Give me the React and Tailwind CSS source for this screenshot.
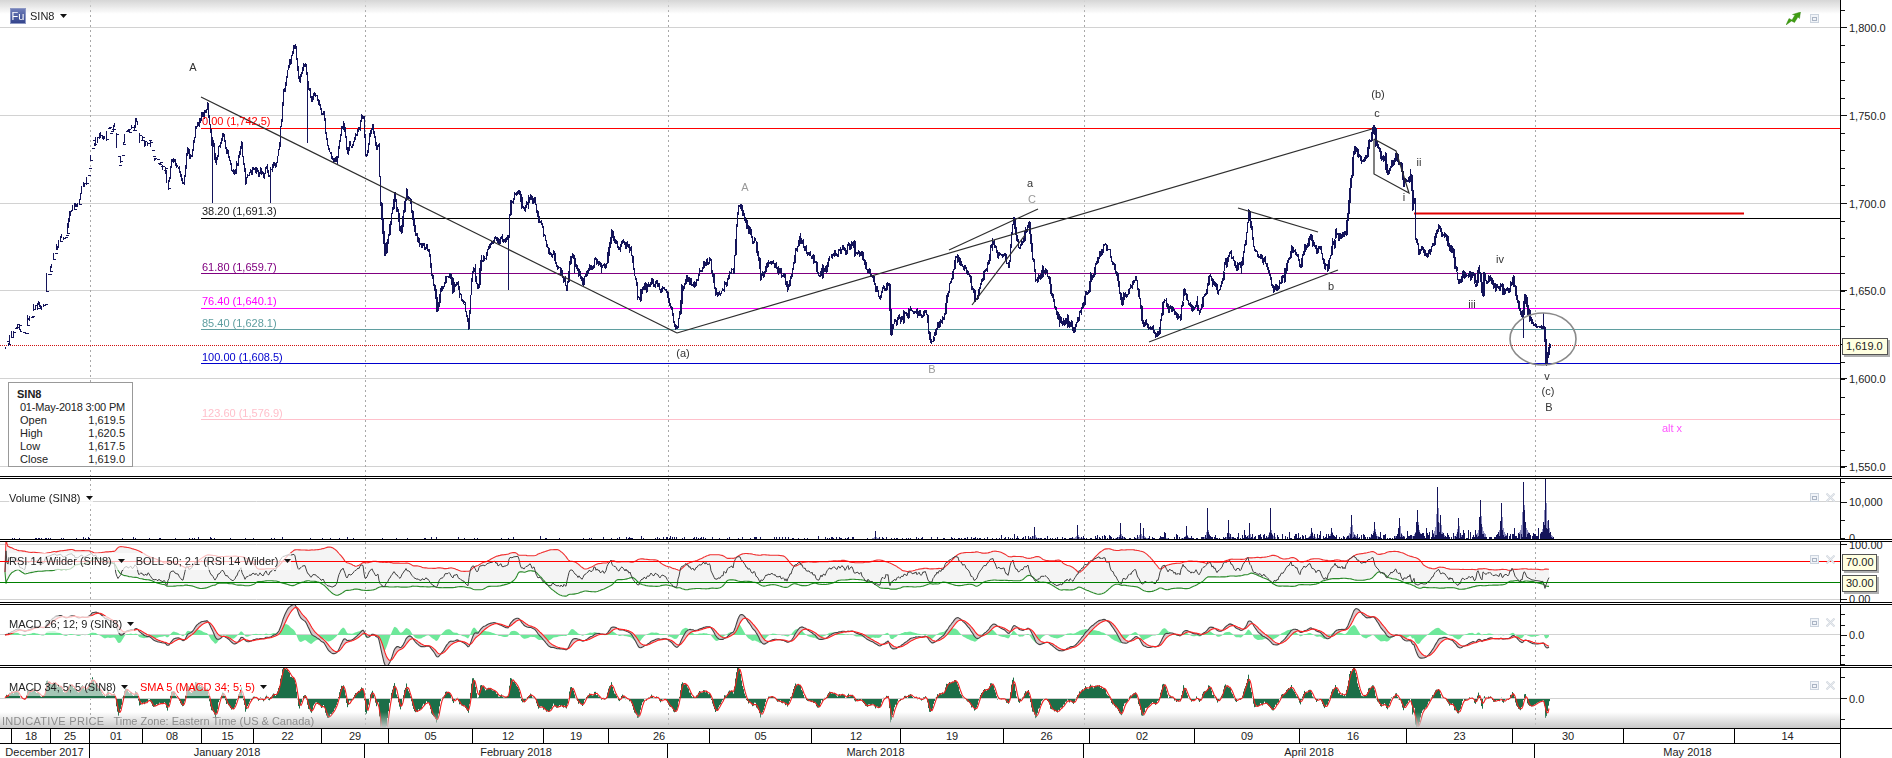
import React from "react";

// price path read off the chart, page pixels [x, y]
const KEYS = [
  [5,347],[6,337],[16,328],[26,322],[34,303],[44,310],[46,283],[52,263],[56,248],[66,227],[74,207],[80,193],[86,182],[90,160],[92,147],
  [100,137],[114,130],[118,165],[124,133],[137,120],[139,143],[149,140],[155,163],[165,177],[167,187],[171,157],[177,173],[183,182],
  [187,147],[191,157],[195,123],[201,113],[207,105],[211,133],[215,157],[221,133],[229,153],[235,173],[241,150],[245,185],[249,167],
  [257,167],[265,173],[275,173],[279,150],[283,97],[289,70],[295,50],[299,83],[305,63],[311,100],[319,97],[323,115],[325,133],[329,157],
  [337,163],[343,127],[347,160],[355,133],[363,115],[365,147],[372,133],[378,150],[380,207],[382,227],[384,248],[388,227],[394,197],
  [400,230],[406,192],[414,233],[420,248],[428,253],[432,283],[436,310],[446,280],[454,283],[462,293],[468,323],[472,273],[478,287],
  [480,263],[488,252],[490,240],[508,247],[510,210],[516,187],[522,210],[530,197],[538,217],[542,237],[550,257],[556,270],[566,287],
  [570,260],[583,283],[595,257],[605,273],[611,235],[617,250],[630,247],[637,300],[645,290],[655,277],[664,297],[677,330],[682,287],
  [694,280],[701,267],[709,257],[716,290],[733,273],[738,210],[745,227],[755,237],[760,273],[772,267],[787,290],[799,243],[812,260],
  [819,283],[839,247],[851,250],[871,273],[880,300],[888,280],[890,327],[910,307],[925,313],[930,343],[944,317],[949,280],[954,260],
  [969,270],[974,303],[984,270],[991,247],[1008,257],[1013,223],[1018,243],[1028,223],[1035,273],[1047,273],[1055,313],[1074,327],
  [1084,300],[1097,257],[1104,247],[1116,273],[1121,300],[1136,280],[1141,317],[1158,333],[1163,300],[1180,320],[1183,287],[1200,310],
  [1210,273],[1217,290],[1227,257],[1241,270],[1248,213],[1254,247],[1264,257],[1271,290],[1283,273],[1291,250],[1300,262],[1310,233],
  [1327,265],[1335,230],[1345,237],[1350,180],[1354,143],[1362,163],[1373,130],[1377,147],[1389,173],[1396,153],[1400,165],[1403,180],
  [1410,173],[1412,203],[1414,197],[1415,233],[1418,248],[1428,248],[1438,237],[1450,248],[1452,253],[1457,278],[1473,268],[1475,283],
  [1478,265],[1482,297],[1483,278],[1500,280],[1503,293],[1512,278],[1515,293],[1517,300],[1522,313],[1524,293],[1528,317],[1533,325],
  [1543,328],[1544,340],[1545,365],[1548,350],[1549,345],
];
const SPIKES = [[212,203],[270,203],[307,143],[508,290],[574,273],[1523,338],[1543,313]];
const VOL_PEAKS = [
  [875,531],[1034,527],[1077,525],[1120,523],[1140,523],[1143,528],[1164,532],[1186,526],[1207,508],[1228,520],[1249,523],[1270,508],
  [1311,528],[1331,528],[1351,515],[1374,522],[1399,518],[1417,510],[1437,487],[1440,515],[1458,518],[1480,500],[1501,503],[1523,482],
  [1545,479],[1548,520],
];
const DAYS = [
  ["", 12],["18", 39],["25", 39],["01", 53],["08", 59],["15", 52],["22", 68],["29", 67],["05", 84],["12", 71],["19", 65],["26", 101],
  ["05", 102],["12", 89],["19", 103],["26", 86],["02", 105],["09", 105],["16", 107],["23", 106],["30", 111],["07", 111],["14", 105],
];
const MONTHS = [
  ["December 2017", 90],["January 2018", 275],["February 2018", 303],["March 2018", 416],["April 2018", 451],["May 2018", 305],
];
const DIVS = [90, 365, 668, 1084, 1535];

let seed = 20180501;
const rnd = () => {
  seed = (seed + 0x6d2b79f5) | 0;
  let t = Math.imul(seed ^ (seed >>> 15), 1 | seed);
  t = (t + Math.imul(t ^ (t >>> 7), 61 | t)) ^ t;
  return ((t ^ (t >>> 14)) >>> 0) / 4294967296;
};

const ema = (arr, n) => {
  const k = 2 / (n + 1);
  let e = arr[0];
  return arr.map((v) => (e = v * k + e * (1 - k)));
};
const sma = (arr, n) =>
  arr.map((_, i) => {
    const w = arr.slice(Math.max(0, i - n + 1), i + 1);
    return w.reduce((a, b) => a + b, 0) / w.length;
  });
const pts = (xs, ys) => xs.map((x, i) => `${x},${ys[i].toFixed(1)}`).join(" ");

// hourly bars, about one per pixel
const xs = [];
const closes = [];
let noise = 0;
let slow = 0;
let k = 0;
for (let x = 5; x <= 1549; x++) {
  while (k < KEYS.length - 2 && KEYS[k + 1][0] < x) k++;
  const [x0, y0] = KEYS[k];
  const [x1, y1] = KEYS[k + 1];
  const base = y0 + ((y1 - y0) * (x - x0)) / Math.max(1, x1 - x0);
  noise = noise * 0.7 + (rnd() - 0.5) * 9;
  slow = slow * 0.95 + (rnd() - 0.5) * 2;
  xs.push(x);
  closes.push(base + (noise + slow) * (x > 1530 ? 0.2 : 1));
}
let pricePath = "";
let tickPath = "";
closes.forEach((c, i) => {
  const p = i ? closes[i - 1] : c;
  const x = xs[i] + 0.5;
  const reach = rnd() < 0.04 ? 7 : 2.4;
  const hi = Math.min(c, p) - rnd() * reach;
  const lo = Math.max(c, p) + rnd() * reach;
  if (xs[i] < 170 && rnd() < 0.5) {
    tickPath += `M${x} ${c.toFixed(0)}h3`;
    return;
  }
  pricePath += `M${x} ${hi.toFixed(0)}V${lo.toFixed(0)}`;
  if (xs[i] > 380 && rnd() < (xs[i] > 1340 ? 0.8 : 0.45)) {
    pricePath += `M${x + 1} ${(hi + 1).toFixed(0)}V${(lo - 1).toFixed(0)}`;
  }
});

// indicators worked out from the closes, in pixel units
const v = closes.map((c) => -c);
const e12 = ema(v, 12);
const e26 = ema(v, 26);
const macd = e12.map((e, i) => e - e26[i]);
const sig = ema(macd, 9);
const macdY = macd.map((m) => 635 - m * 1.05);
const sigY = sig.map((m) => 635 - m * 1.05);
const histY = macd.map((m, i) => 635 - (m - sig[i]) * 1.3);

let up = 0;
let dn = 0;
const rsi = v.map((c, i) => {
  const d = i ? c - v[i - 1] : 0;
  up = (up * 13 + Math.max(d, 0)) / 14;
  dn = (dn * 13 + Math.max(-d, 0)) / 14;
  return up + dn === 0 ? 50 : 50 + ((100 * up) / (up + dn) - 50) * 0.85;
});
const rsiMid = sma(rsi, 50);
const rsiDev = rsi.map((_, i) => {
  const w = rsi.slice(Math.max(0, i - 49), i + 1);
  return Math.sqrt(w.reduce((a, b) => a + (b - rsiMid[i]) ** 2, 0) / w.length);
});
const rsiToY = (r) => 597 - r * 0.5;
const rsiY = rsi.map(rsiToY);
const upperY = rsi.map((_, i) => rsiToY(rsiMid[i] + 2.1 * rsiDev[i]));
const lowerY = rsi.map((_, i) => rsiToY(rsiMid[i] - 2.1 * rsiDev[i]));

const fast = ema(v, 2);
const slowE = ema(v, 10);
const osc = fast.map((e, i) => e - slowE[i]);
const oscSma = sma(osc, 4);

let volDark = "";
let volLight = "";
xs.forEach((x) => {
  const amp = x < 600 ? 1.6 : x < 1000 ? 2.5 : x < 1200 ? 4 : x < 1400 ? 7 : 10;
  const h = rnd() * rnd() * amp + (rnd() > 0.95 ? rnd() * amp : 0);
  if (h >= 1) volDark += `M${x + 0.5} 539V${(539 - h).toFixed(0)}`;
});
VOL_PEAKS.forEach(([x, y]) => {
  volDark += `M${x + 0.5} 539V${y}`;
  const h = 539 - y;
  for (let i = 1; i < 6; i++) {
    const f = x > 1300 ? 0.6 / i : 0.3 / i;
    volLight += `M${x + i + 0.5} 539V${(539 - h * f).toFixed(0)}M${x - i + 0.5} 539V${(539 - h * f * 0.8).toFixed(0)}`;
    if (x > 1180) volDark += `M${x - i + 0.5} 539V${(539 - h * f * rnd()).toFixed(0)}M${x + i + 0.5} 539V${(539 - h * f * rnd()).toFixed(0)}`;
  }
});

const Caret = () => (
  <svg className="w-[7px] h-[4px] shrink-0" viewBox="0 0 7 4">
    <polygon points="0,0 7,0 3.5,4" fill="#111" />
  </svg>
);

const RestoreIcon = () => (
  <svg className="w-[9px] h-[9px]" viewBox="0 0 9 9">
    <rect x="0.5" y="0.5" width="8" height="8" fill="#f1f4f8" stroke="#ccd4de" />
    <rect x="2.5" y="3.5" width="4" height="3" fill="none" stroke="#aab4c4" />
  </svg>
);

const CloseIcon = () => (
  <svg className="w-[9px] h-[9px]" viewBox="0 0 9 9">
    <path d="M0.5 0.5L8.5 8.5M8.5 0.5L0.5 8.5" stroke="#d4d9e0" strokeWidth="2" />
    <path d="M0.5 0.5L8.5 8.5M8.5 0.5L0.5 8.5" stroke="#eef0f4" strokeWidth="0.7" />
  </svg>
);

const Dividers = ({ top, h }) =>
  DIVS.map((x) => (
    <line key={x} x1={x + 0.5} x2={x + 0.5} y1={top} y2={top + h} stroke="#a8a8a8" strokeDasharray="2 3" />
  ));

const Grid = ({ ys }) =>
  ys.map((y) => <line key={y} x1="0" x2="1840" y1={y + 0.5} y2={y + 0.5} stroke="#d2d2d2" />);

const ChartText = ({ x, y, fill = "#333", anchor = "start", children }) => (
  <text x={x} y={y} fill={fill} textAnchor={anchor} dominantBaseline="central" className="text-[11px]">
    {children}
  </text>
);

const Axis = ({ top, h, major = [], minor = [], labels = [], children }) => (
  <div className="relative w-[52px] h-full border-l border-black bg-white">
    <svg className="block w-[51px] h-full" viewBox={`1841 ${top} 51 ${h}`}>
      {major.map((y) => (
        <line key={y} x1="1841" x2="1847" y1={y + 0.5} y2={y + 0.5} stroke="#111" />
      ))}
      {minor.map((y) => (
        <line key={y} x1="1841" x2="1845" y1={y + 0.5} y2={y + 0.5} stroke="#111" />
      ))}
      {labels.map(([y, t]) => (
        <ChartText key={t} x={1849} y={y} fill="#222">
          {t}
        </ChartText>
      ))}
    </svg>
    {children}
  </div>
);

const Panel = ({ top, h, className, svg, axis, children }) => (
  <div className={`flex ${className}`}>
    <div className="relative flex-1 h-full overflow-hidden">
      <svg className="block w-full h-full will-change-transform" viewBox={`0 ${top} 1840 ${h}`}>
        {svg}
      </svg>
      {children}
    </div>
    {axis}
  </div>
);

const PanelButtons = ({ className, close = true }) => (
  <div className={`absolute flex items-center gap-[7px] ${className}`}>
    <RestoreIcon />
    {close && <CloseIcon />}
  </div>
);

const Tag = ({ className, children }) => (
  <div className={`absolute z-10 flex items-center pl-[3px] bg-[#ffffe1] border border-[#555] shadow-[2px_2px_0_#b0b0b0] text-[11px] text-[#222] ${className}`}>
    {children}
  </div>
);

const Sep = () => <div className="h-[3px] border-y border-black bg-white" />;

const minorTicks = [];
for (let y = 9.5; y < 476; y += 17.6) minorTicks.push(Math.round(y));

export default function App() {
  return (
    <div className="relative flex flex-col w-[1892px] h-[758px] overflow-hidden bg-white text-[11px] text-[#222] font-['Liberation_Sans',sans-serif]">
      {/* Price panel */}
      <Panel
        top={0}
        h={476}
        className="h-[476px]"
        axis={
          <Axis
            top={0}
            h={476}
            minor={minorTicks}
            major={[27, 115, 203, 290, 378, 466]}
            labels={[[28, "1,800.0"],[116, "1,750.0"],[204, "1,700.0"],[291, "1,650.0"],[379, "1,600.0"],[467, "1,550.0"]]}
          >
            <Tag className="left-[1px] top-[338px] w-[46px] h-[17px]">1,619.0</Tag>
          </Axis>
        }
        svg={
          <>
            <Grid ys={[27, 115, 203, 290, 378, 466]} />
            <Dividers top={0} h={476} />
            <line x1="201" x2="1840" y1="128.5" y2="128.5" stroke="#ff0000" />
            <line x1="201" x2="1840" y1="218.5" y2="218.5" stroke="#000" />
            <line x1="201" x2="1840" y1="273.5" y2="273.5" stroke="#800080" />
            <line x1="201" x2="1840" y1="308.5" y2="308.5" stroke="#ff00ff" />
            <line x1="201" x2="1840" y1="329.5" y2="329.5" stroke="#5f9ea0" />
            <line x1="201" x2="1840" y1="363.5" y2="363.5" stroke="#0000cd" />
            <line x1="201" x2="1840" y1="419.5" y2="419.5" stroke="#ffc0cb" />
            <line x1="0" x2="1840" y1="345.5" y2="345.5" stroke="#d01010" strokeDasharray="1 1" />
            <line x1="1414" x2="1744" y1="213.5" y2="213.5" stroke="#e00000" strokeWidth="2" />
            <path d={pricePath} stroke="#14145a" strokeWidth="1" shapeRendering="crispEdges" fill="none" />
            <path d={tickPath} stroke="#14145a" strokeWidth="1" shapeRendering="crispEdges" fill="none" />
            {SPIKES.map(([x, y]) => (
              <line key={x} x1={x + 0.5} x2={x + 0.5} y1={closes[x - 5]} y2={y} stroke="#14145a" />
            ))}
            <g stroke="#2e2e2e" strokeWidth="1.2" fill="none">
              <line x1="201" y1="97" x2="677" y2="333" />
              <line x1="677" y1="333" x2="1372" y2="129" />
              <line x1="949" y1="250" x2="1038" y2="209" />
              <line x1="972" y1="305" x2="1025" y2="235" />
              <line x1="1149" y1="342" x2="1338" y2="270" />
              <line x1="1238" y1="208" x2="1318" y2="232" />
              <polyline points="1374,139 1374,174 1409,193 1396,151 1374,139" />
            </g>
            <ellipse cx="1543" cy="339" rx="33" ry="26" fill="none" stroke="#8a8a8a" strokeWidth="1.6" />
            <ChartText x={202} y={121} fill="#ff0000">0.00 (1,742.5)</ChartText>
            <ChartText x={202} y={211} fill="#222">38.20 (1,691.3)</ChartText>
            <ChartText x={202} y={267} fill="#800080">61.80 (1,659.7)</ChartText>
            <ChartText x={202} y={301} fill="#ff00ff">76.40 (1,640.1)</ChartText>
            <ChartText x={202} y={323} fill="#5f9ea0">85.40 (1,628.1)</ChartText>
            <ChartText x={202} y={357} fill="#0000cd">100.00 (1,608.5)</ChartText>
            <ChartText x={202} y={413} fill="#ffc0cb">123.60 (1,576.9)</ChartText>
            <ChartText x={193} y={67} anchor="middle">A</ChartText>
            <ChartText x={1378} y={94} anchor="middle">(b)</ChartText>
            <ChartText x={1377} y={113} anchor="middle">c</ChartText>
            <ChartText x={1419} y={162} anchor="middle">ii</ChartText>
            <ChartText x={1404} y={197} anchor="middle">i</ChartText>
            <ChartText x={745} y={187} anchor="middle" fill="#999">A</ChartText>
            <ChartText x={1030} y={183} anchor="middle">a</ChartText>
            <ChartText x={1032} y={199} anchor="middle" fill="#999">C</ChartText>
            <ChartText x={683} y={353} anchor="middle">(a)</ChartText>
            <ChartText x={932} y={369} anchor="middle" fill="#999">B</ChartText>
            <ChartText x={1331} y={286} anchor="middle">b</ChartText>
            <ChartText x={1500} y={259} anchor="middle">iv</ChartText>
            <ChartText x={1472} y={304} anchor="middle">iii</ChartText>
            <ChartText x={1547} y={376} anchor="middle">v</ChartText>
            <ChartText x={1548} y={391} anchor="middle">(c)</ChartText>
            <ChartText x={1549} y={407} anchor="middle">B</ChartText>
            <ChartText x={1672} y={428} anchor="middle" fill="#ff55ff">alt x</ChartText>
          </>
        }
      >
        <div className="absolute inset-x-0 top-0 h-[14px] bg-linear-to-b from-[#d6d6d6] to-white/0" />
        <div className="absolute left-[10px] top-[8px] flex items-center">
          <div className="flex items-center justify-center w-[16px] h-[16px] border border-[#8d98c4] bg-linear-to-b from-[#6f7db8] to-[#34448c] text-white text-[11px] leading-none">
            Fu
          </div>
          <span className="ml-[4px] mr-[6px]">SIN8</span>
          <Caret />
        </div>
        <svg className="absolute left-[1786px] top-[12px] w-[15px] h-[13px]" viewBox="0 0 15 13">
          <path d="M0 13L3 6.5L6 8L9 3L6.5 2.5L14.5 0L13.5 6.5L12 5L8.5 10.5L5.5 9L0 13Z" fill="#3f9e12" stroke="#2d7d0a" strokeWidth="0.4" />
        </svg>
        <PanelButtons className="left-[1810px] top-[14px]" close={false} />
        <div className="absolute left-[8px] top-[382px] flex flex-col w-[125px] h-[85px] pl-[8px] pr-[7px] py-[5px] border border-[#999] bg-white leading-[13px] whitespace-nowrap">
          <div className="font-bold">SIN8</div>
          <div className="tracking-[-0.2px] text-right">01-May-2018 3:00 PM</div>
          {[["Open", "1,619.5"],["High", "1,620.5"],["Low", "1,617.5"],["Close", "1,619.0"]].map(([a, b]) => (
            <div key={a} className="flex justify-between pl-[3px]">
              <span>{a}</span>
              <span>{b}</span>
            </div>
          ))}
        </div>
      </Panel>
      <Sep />

      {/* Volume */}
      <Panel
        top={479}
        h={60}
        className="h-[60px]"
        axis={
          <Axis top={479} h={60} major={[502]} minor={[482, 520, 538]} labels={[[502, "10,000"],[538, "0"]]} />
        }
        svg={
          <>
            <Grid ys={[501]} />
            <Dividers top={479} h={60} />
            <path d={volLight} stroke="#8a8abc" fill="none" shapeRendering="crispEdges" />
            <path d={volDark} stroke="#14145a" fill="none" shapeRendering="crispEdges" />
          </>
        }
      >
        <div className="absolute left-[9px] top-[11px] flex items-center gap-[5px] bg-white/70">
          <span>Volume (SIN8)</span>
          <Caret />
        </div>
        <PanelButtons className="left-[1810px] top-[14px]" />
      </Panel>
      <Sep />

      {/* RSI + Bollinger */}
      <Panel
        top={542}
        h={60}
        className="h-[60px]"
        axis={
          <Axis top={542} h={60} labels={[[545, "100.00"],[599, "0.00"]]} major={[544, 599]}>
            <Tag className="left-[1px] top-[12px] w-[35px] h-[17px]">70.00</Tag>
            <Tag className="left-[1px] top-[33px] w-[35px] h-[17px]">30.00</Tag>
          </Axis>
        }
        svg={
          <>
            <Grid ys={[544, 599]} />
            <polygon points={`${pts(xs, upperY)} ${pts([...xs].reverse(), [...lowerY].reverse())}`} fill="#f4f4f4" />
            <Dividers top={542} h={60} />
            <polyline points={pts(xs, upperY)} fill="none" stroke="#f03030" strokeWidth="1.1" />
            <polyline points={pts(xs, lowerY)} fill="none" stroke="#2a8a2a" strokeWidth="1.1" />
            <polyline points={pts(xs, rsiY)} fill="none" stroke="#444" strokeWidth="1" />
            <line x1="0" x2="1840" y1="561.5" y2="561.5" stroke="#ff0000" />
            <line x1="0" x2="1840" y1="582.5" y2="582.5" stroke="#008000" />
          </>
        }
      >
        <div className="absolute left-[9px] top-[11px] flex items-center bg-white/70">
          <span className="mr-[6px]">RSI 14 Wilder (SIN8)</span>
          <Caret />
          <span className="ml-[11px] mr-[6px]">BOLL 50; 2.1 (RSI 14 Wilder)</span>
          <Caret />
        </div>
        <PanelButtons className="left-[1810px] top-[13px]" />
      </Panel>
      <Sep />

      {/* MACD 26 12 9 */}
      <Panel
        top={605}
        h={60}
        className="h-[60px]"
        axis={
          <Axis top={605} h={60} major={[635]} minor={[614, 625, 645, 655, 664]} labels={[[635, "0.0"]]} />
        }
        svg={
          <>
            <Grid ys={[634]} />
            <Dividers top={605} h={60} />
            <polygon points={`5,635 ${pts(xs, histY)} 1549,635`} fill="#6ee89a" />
            <polygon points={`${pts(xs, macdY)} ${pts([...xs].reverse(), [...sigY].reverse())}`} fill="#d9c8cc" />
            <polyline points={pts(xs, macdY)} fill="none" stroke="#444" strokeWidth="1.1" />
            <polyline points={pts(xs, sigY)} fill="none" stroke="#ff2020" strokeWidth="1.1" />
          </>
        }
      >
        <div className="absolute left-[9px] top-[11px] flex items-center gap-[5px] bg-white/70">
          <span>MACD 26; 12; 9 (SIN8)</span>
          <Caret />
        </div>
        <PanelButtons className="left-[1810px] top-[13px]" />
      </Panel>
      <Sep />

      {/* MACD 34 5 5 */}
      <Panel
        top={668}
        h={60}
        className="h-[60px]"
        axis={<Axis top={668} h={60} major={[698]} minor={[677, 719]} labels={[[699, "0.0"]]} />}
        svg={
          <>
            <Dividers top={668} h={60} />
            <path
              d={xs.map((x, i) => `M${x + 0.5} 698V${(698 - osc[i]).toFixed(1)}`).join("")}
              stroke="#1c6e48"
              fill="none"
            />
            <Grid ys={[698]} />
            <polyline points={pts(xs, oscSma.map((o) => 698 - o))} fill="none" stroke="#f02020" strokeWidth="1.1" />
          </>
        }
      >
        <div className="absolute inset-x-0 bottom-0 h-[16px] bg-linear-to-b from-white/0 to-[#c8c8c8]" />
        <div className="absolute left-[9px] top-[11px] flex items-center bg-white/60">
          <span className="mr-[5px]">MACD 34; 5; 5 (SIN8)</span>
          <Caret />
          <span className="ml-[12px] mr-[5px] text-[#ff0000]">SMA 5 (MACD 34; 5; 5)</span>
          <Caret />
        </div>
        <div className="absolute left-[2px] bottom-0 flex gap-[9px] text-[#8c8c8c] leading-[13px]">
          <span className="tracking-[0.3px]">INDICATIVE PRICE</span>
          <span>Time Zone: Eastern Time (US &amp; Canada)</span>
        </div>
        <PanelButtons className="left-[1810px] top-[13px]" />
      </Panel>

      {/* Time axis */}
      <div className="flex h-[30px] border-t border-black">
        <div className="flex flex-col w-[1840px]">
          <div className="flex h-[15px] border-b border-black">
            {DAYS.map(([d, w], i) => (
              <div
                key={i}
                style={{ width: w }}
                className="flex items-center justify-center h-full border-r border-black last:border-r-0"
              >
                {d}
              </div>
            ))}
          </div>
          <div className="flex flex-1">
            {MONTHS.map(([m, w]) => (
              <div
                key={m}
                style={{ width: w }}
                className="flex items-center justify-center h-full border-r border-black last:border-r-0"
              >
                {m}
              </div>
            ))}
          </div>
        </div>
        <div className="w-[52px] border-l border-black" />
      </div>
    </div>
  );
}
